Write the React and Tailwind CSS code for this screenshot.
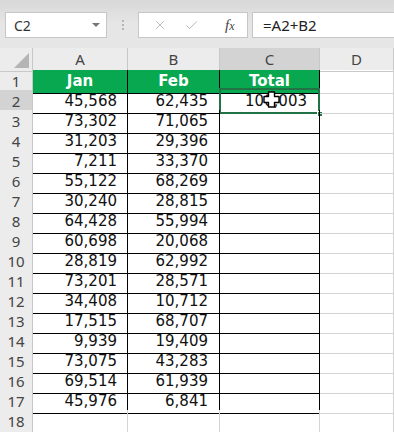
import { X, Check } from 'lucide-react';

const COLS = ['A', 'B', 'C', 'D'];

const JAN = ['45,568', '73,302', '31,203', '7,211', '55,122', '30,240', '64,428', '60,698', '28,819', '73,201', '34,408', '17,515', '9,939', '73,075', '69,514', '45,976'];
const FEB = ['62,435', '71,065', '29,396', '33,370', '68,269', '28,815', '55,994', '20,068', '62,992', '28,571', '10,712', '68,707', '19,409', '43,283', '61,939', '6,841'];

const GRID = 'grid grid-cols-[33px_95px_92px_100px_1fr]';

function Cursor() {
  return (
    <svg width="17" height="17" viewBox="0 0 17 17" className="absolute left-[43px] top-[1px]">
      <path
        d="M5.5 1h6v4.5H16v6h-4.5V16h-6v-4.5H1v-6h4.5z"
        fill="white"
        stroke="black"
        strokeWidth="1.4"
        strokeLinejoin="round"
      />
    </svg>
  );
}

function Cell({ row, col }) {
  const inTable = row <= 17 && col < 3;
  const border = inTable ? 'border-r border-b border-black' : 'border-r border-b border-[#d4d4d4]';

  if (row === 1 && col < 3) {
    const label = ['Jan', 'Feb', 'Total'][col];
    return (
      <div className={`${border} bg-[#07a84f] flex items-center justify-center text-white font-bold text-[15px]`}>
        {label}
      </div>
    );
  }

  let value = '';
  if (row >= 2 && row <= 17) {
    if (col === 0) value = JAN[row - 2];
    if (col === 1) value = FEB[row - 2];
    if (col === 2 && row === 2) value = '100,003';
  }

  const pr = col === 0 ? 'pr-[10px]' : col === 1 ? 'pr-[11px]' : 'pr-[12px]';

  return (
    <div className={`${border} relative flex items-center justify-end ${pr} text-[15px] text-[#111]`}>
      {value}
      {row === 2 && col === 2 && (
        <>
          <div className="absolute -left-px -top-[2px] -right-px -bottom-px border-2 border-[#217346]" />
          <div className="absolute -right-[4px] -bottom-[4px] w-[6px] h-[6px] bg-[#217346] border border-white" />
          <Cursor />
        </>
      )}
    </div>
  );
}

export default function App() {
  const rows = Array.from({ length: 18 }, (_, i) => i + 1);

  return (
    <div className="w-[394px] h-[432px] overflow-hidden bg-white" style={{ fontFamily: '"DejaVu Sans", Verdana, sans-serif' }}>
      {/* Formula bar */}
      <div className="h-[48px] bg-gradient-to-b from-[#d8d8d8] via-[#e6e6e6] to-[#e6e6e6] flex items-start pt-[12px] pl-[5px] font-['Noto_Sans',sans-serif]">
        <div className="w-[102px] h-[26px] bg-white border border-[#c6c6c6] flex items-center pl-[8px] pr-[6px] justify-between">
          <span className="text-[14px] text-[#333]">C2</span>
          <span className="w-0 h-0 border-l-[4px] border-r-[4px] border-t-[4px] border-l-transparent border-r-transparent border-t-[#777]" />
        </div>
        <div className="w-[31px] h-[26px] flex flex-col items-center justify-center gap-[2px]">
          <span className="w-[2px] h-[2px] bg-[#b5b5b5]" />
          <span className="w-[2px] h-[2px] bg-[#b5b5b5]" />
          <span className="w-[2px] h-[2px] bg-[#b5b5b5]" />
        </div>
        <div className="w-[110px] h-[26px] bg-white border border-[#c6c6c6] flex items-center pl-[14px]">
          <X size={14} strokeWidth={1.6} className="text-[#b8b8b8]" />
          <Check size={15} strokeWidth={1.6} className="text-[#b8b8b8] ml-[17px]" />
          <span className="ml-[26px] text-[15px] italic text-[#444] font-['Liberation_Serif',serif]">
            f<span className="text-[12px]">x</span>
          </span>
        </div>
        <div className="flex-1 ml-[4px] h-[26px] bg-white border border-[#c6c6c6] border-r-0 flex items-center pl-[10px]">
          <span className="text-[15px] text-[#222]">=A2+B2</span>
        </div>
      </div>

      {/* Column headers */}
      <div className={`${GRID} h-[22px] bg-[#ececec] font-['Noto_Sans',sans-serif] text-[15px] text-[#444]`}>
        <div className="border-r border-b border-[#c8c8c8] relative">
          <svg width="15" height="15" viewBox="0 0 15 15" className="absolute right-[3px] bottom-[3px]">
            <path d="M15 0V15H0z" fill="#b4b4b4" />
          </svg>
        </div>
        {COLS.map((c) => (
          <div
            key={c}
            className={`border-r border-b border-[#c8c8c8] flex items-center justify-center ${c === 'C' ? 'bg-[#d3d3d3]' : ''}`}
          >
            {c}
          </div>
        ))}
      </div>

      {/* Rows */}
      {rows.map((r) => (
        <div key={r} className={`${GRID} h-[20px]`}>
          <div
            className={`border-r border-b border-[#c8c8c8] flex items-center justify-center font-['Noto_Sans',sans-serif] text-[15px] text-[#444] ${r === 2 ? 'bg-[#d3d3d3]' : 'bg-[#ececec]'}`}
          >
            {r}
          </div>
          {[0, 1, 2, 3].map((c) => (
            <Cell key={c} row={r} col={c} />
          ))}
        </div>
      ))}
      <div className={`${GRID} h-[20px]`}>
        <div className="border-r border-[#c8c8c8] bg-[#ececec]" />
        <div className="border-r border-[#d4d4d4]" />
        <div className="border-r border-[#d4d4d4]" />
        <div className="border-r border-[#d4d4d4]" />
        <div className="border-r border-[#d4d4d4]" />
      </div>
    </div>
  );
}
